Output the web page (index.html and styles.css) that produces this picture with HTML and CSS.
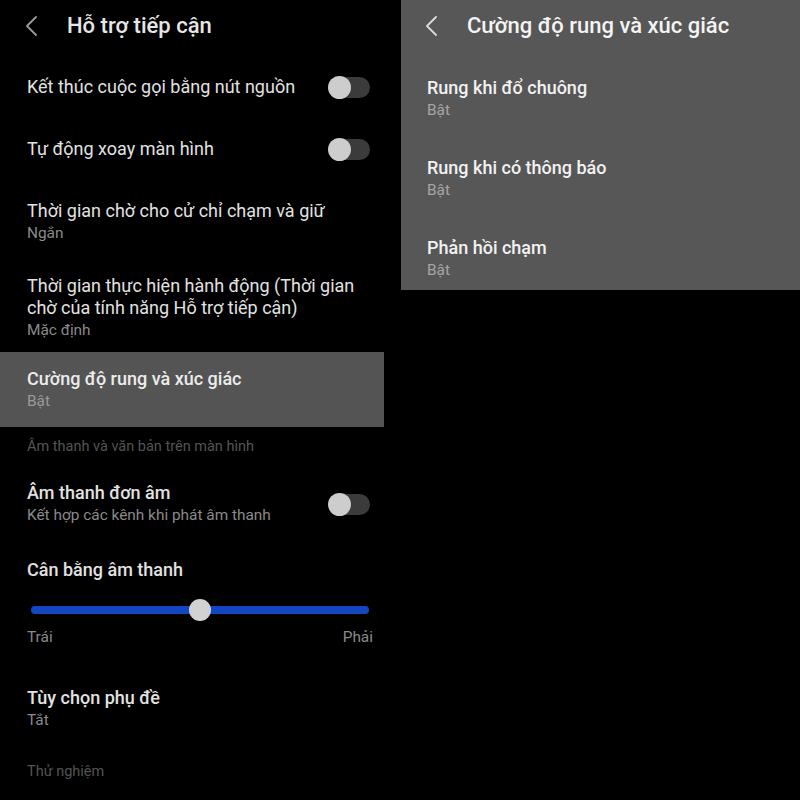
FILE: index.html
```html
<!DOCTYPE html>
<html lang="vi">
<head>
<meta charset="utf-8">
<title>Hỗ trợ tiếp cận</title>
<link rel="stylesheet" href="styles.css">
</head>
<body>
<div class="screen">
  <section class="panel-left">
    <header class="appbar">
      <svg class="back" width="12" height="20" viewBox="0 0 12 20"><path d="M11 1 L2 10 L11 19" /></svg>
      <h1 class="appbar-title">Hỗ trợ tiếp cận</h1>
    </header>

    <div class="row row-a">
      <div class="text"><div class="title">Kết thúc cuộc gọi bằng nút nguồn</div></div>
      <span class="switch"><span class="knob"></span></span>
    </div>
    <div class="row row-b">
      <div class="text"><div class="title">Tự động xoay màn hình</div></div>
      <span class="switch"><span class="knob"></span></span>
    </div>
    <div class="row row-c">
      <div class="text">
        <div class="title">Thời gian chờ cho cử chỉ chạm và giữ</div>
        <div class="sub">Ngắn</div>
      </div>
    </div>
    <div class="row row-d">
      <div class="text">
        <div class="title">Thời gian thực hiện hành động (Thời gian chờ của tính năng Hỗ trợ tiếp cận)</div>
        <div class="sub">Mặc định</div>
      </div>
    </div>
    <div class="row row-e selected">
      <div class="text">
        <div class="title strong">Cường độ rung và xúc giác</div>
        <div class="sub">Bật</div>
      </div>
    </div>

    <div class="section-label sl-1">Âm thanh và văn bản trên màn hình</div>

    <div class="row row-f">
      <div class="text">
        <div class="title strong">Âm thanh đơn âm</div>
        <div class="sub">Kết hợp các kênh khi phát âm thanh</div>
      </div>
      <span class="switch"><span class="knob"></span></span>
    </div>

    <div class="row row-g">
      <div class="text">
        <div class="title strong">Cân bằng âm thanh</div>
        <div class="slider">
          <div class="track"></div>
          <span class="thumb" style="left: 50%"></span>
        </div>
        <div class="slider-labels"><span>Trái</span><span>Phải</span></div>
      </div>
    </div>

    <div class="row row-h">
      <div class="text">
        <div class="title strong">Tùy chọn phụ đề</div>
        <div class="sub">Tắt</div>
      </div>
    </div>

    <div class="section-label sl-2">Thử nghiệm</div>
  </section>

  <section class="panel-right">
    <header class="appbar appbar-right">
      <svg class="back" width="12" height="20" viewBox="0 0 12 20"><path d="M11 1 L2 10 L11 19" /></svg>
      <h1 class="appbar-title">Cường độ rung và xúc giác</h1>
    </header>
    <div class="rlist">
      <div class="ritem">
        <div class="title strong">Rung khi đổ chuông</div>
        <div class="sub">Bật</div>
      </div>
      <div class="ritem">
        <div class="title strong">Rung khi có thông báo</div>
        <div class="sub">Bật</div>
      </div>
      <div class="ritem">
        <div class="title strong">Phản hồi chạm</div>
        <div class="sub">Bật</div>
      </div>
    </div>
  </section>
</div>
</body>
</html>
```

FILE: styles.css
```css
* { box-sizing: border-box; }

html, body {
  margin: 0;
  padding: 0;
  background: #000;
}

body {
  font-family: Roboto, "Noto Sans", "Liberation Sans", sans-serif;
  color: #e4e4e4;
  width: 800px;
  height: 800px;
  overflow: hidden;
}

.screen {
  display: flex;
  align-items: flex-start;
  width: 800px;
  height: 800px;
}

.panel-left {
  width: 384px;
  flex: 0 0 384px;
}

.panel-right {
  width: 399px;
  flex: 0 0 399px;
  margin-left: 17px;
  height: 290px;
  overflow: hidden;
  background: #575757;
}

/* App bar */
.appbar {
  height: 52px;
  display: flex;
  align-items: center;
  padding-left: 25px;
}

.appbar-right { padding-left: 24px; }

.back {
  flex: 0 0 12px;
  margin-right: 30px;
}

.back path {
  fill: none;
  stroke: #9a9a9a;
  stroke-width: 1.8;
  stroke-linecap: round;
  stroke-linejoin: round;
}

.appbar-right .back path { stroke: #dadada; }

.appbar-title {
  margin: 0;
  font-size: 22px;
  line-height: 28px;
  font-weight: 500;
  color: #e6e6e6;
}

.appbar-right .appbar-title { color: #f4f4f4; }

/* Rows */
.row {
  display: flex;
  align-items: center;
  padding-left: 27px;
  padding-right: 14px;
}

.row .text {
  flex: 1 1 auto;
  min-width: 0;
}

.title {
  font-size: 18px;
  line-height: 22px;
  font-weight: 400;
  color: #e2e2e2;
}

.title.strong { font-weight: 500; }

.sub {
  font-size: 15.4px;
  line-height: 22px;
  color: #8a8a8a;
}

.row-a { padding-top: 24px; padding-bottom: 20px; }
.row-b { padding-top: 20px; padding-bottom: 20px; }
.row-c { padding-top: 20px; padding-bottom: 15px; }
.row-d { padding-top: 16px; padding-bottom: 11px; padding-right: 20px; }
.row-e { padding-top: 16px; padding-bottom: 15px; }
.row-f { padding-top: 16px; padding-bottom: 16px; }
.row-g { padding-top: 17px; padding-bottom: 24px; }
.row-h { padding-top: 16px; padding-bottom: 15px; }

.selected { background: #545454; }
.selected .title { color: #ececec; }
.selected .sub { color: #9a9a9a; }

/* Section labels */
.section-label {
  padding-left: 27px;
  font-size: 14.5px;
  line-height: 20px;
  color: #545454;
}

.sl-1 { padding-top: 10px; padding-bottom: 9px; }
.sl-2 { padding-top: 16px; }

/* Switch */
.switch {
  position: relative;
  flex: 0 0 41px;
  width: 41px;
  height: 21px;
  border-radius: 11px;
  background: #3b3b3b;
  margin-left: 12px;
}

.knob {
  position: absolute;
  left: -1px;
  top: -1px;
  width: 23px;
  height: 23px;
  border-radius: 50%;
  background: #cdcdcd;
}

/* Slider */
.slider {
  position: relative;
  height: 24px;
  margin: 17px 1px 0 4px;
}

.track {
  position: absolute;
  left: 0;
  right: 0;
  top: 8px;
  height: 8px;
  border-radius: 4px;
  background: #1446c4;
}

.thumb {
  position: absolute;
  top: 1px;
  width: 22px;
  height: 22px;
  margin-left: -11px;
  border-radius: 50%;
  background: #d2d2d2;
}

.slider-labels {
  display: flex;
  justify-content: space-between;
  margin-top: 5px;
  margin-right: -3px;
  font-size: 15.4px;
  line-height: 20px;
  color: #8a8a8a;
}

/* Right panel list */
.rlist { padding-top: 7px; }

.ritem {
  padding: 18px 26px 18px 26px;
}

.ritem .title { color: #f2f2f2; }
.ritem .sub { color: #a6a6a6; }
```
